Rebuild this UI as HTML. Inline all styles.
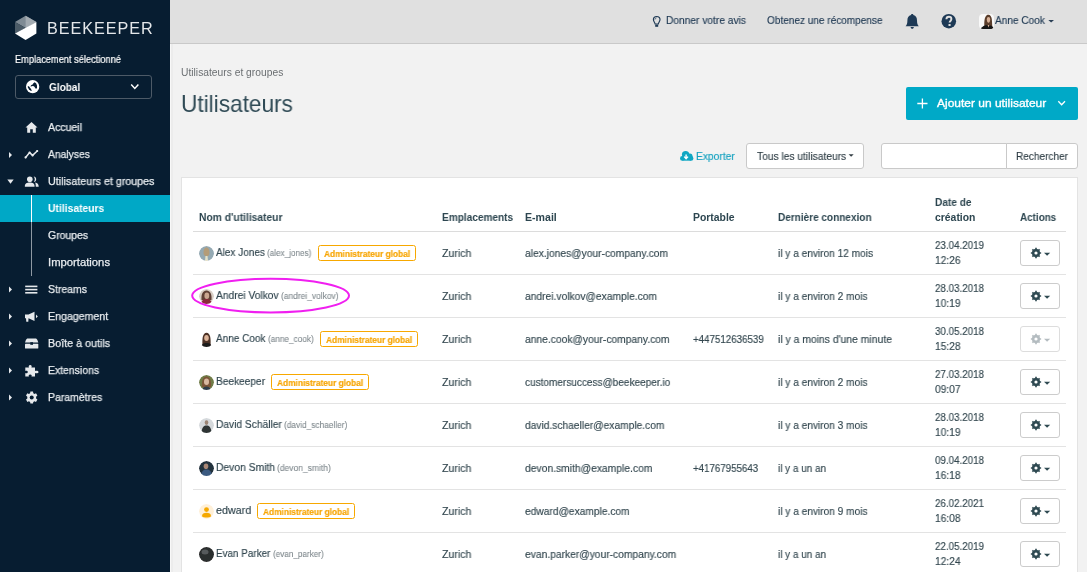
<!DOCTYPE html>
<html><head><meta charset="utf-8">
<style>
*{margin:0;padding:0;box-sizing:border-box}
html,body{width:1087px;height:572px;overflow:hidden;background:#f2f2f2;font-family:"Liberation Sans",sans-serif;position:relative}
.abs{position:absolute}
.tx{position:absolute;white-space:nowrap;line-height:1;transform-origin:0 0;will-change:transform}
#side{position:absolute;left:0;top:0;width:170px;height:572px;background:#071d31}
#topbar{position:absolute;left:170px;top:0;width:917px;height:44px;background:#e0e0e0;border-bottom:1px solid #c9c9c9}
.card{position:absolute;left:181px;top:177px;width:897px;height:420px;background:#fff;border:1px solid #e3e3e3}
.hl{position:absolute;height:1px;background:#dcdcdc}
.badge{position:absolute;height:16px;border:1px solid #f7a800;border-radius:2.5px;background:#fff}
.gbtn{position:absolute;left:1020px;width:40px;height:26px;border:1px solid #c8c8c8;border-radius:3px;background:#fff}
.av{position:absolute;left:199px;width:15px;height:15px;border-radius:50%;overflow:hidden}
</style></head><body>
<div id="side"></div>
<div id="topbar"></div>
<!-- sidebar shadow edge -->
<div class="abs" style="left:170px;top:44px;width:1px;height:528px;background:#f8f8f8"></div><div class="abs" style="left:171px;top:44px;width:2px;height:528px;background:#ececec"></div>

<!-- logo -->
<svg class="abs" style="left:0;top:0" width="170" height="50" viewBox="0 0 170 50">
  <polygon points="25.6,15.8 36.4,21.9 25.6,27.9 15,21.9" fill="#7f8b94"/>
  <polygon points="25.6,15.8 36.4,21.9 25.6,27.9" fill="#a3abb1"/>
  <polygon points="15,21.9 25.6,27.9 15,33.5" fill="#4b5b67"/>
  <polygon points="15,33.5 36.4,21.9 36.4,33.5 25.6,40 " fill="#ffffff"/>
</svg>
<div class="tx" style="left:47.3px;top:20.2px;font-size:16.2px;letter-spacing:0.95px;color:#e4e7ea">BEEKEEPER</div>

<!-- select -->
<div class="abs" style="left:15px;top:75px;width:137px;height:24px;border:1px solid #4d5a67;border-radius:3px"></div>
<svg class="abs" style="left:25.8px;top:79.8px" width="14" height="14" viewBox="0 0 14 14">
  <circle cx="6.65" cy="6.65" r="6.65" fill="#fff"/>
  <path d="M4.4,6.2 L5.4,5.0 L6.6,4.5 L7.4,3.3 L8.7,2.3 L10.2,3.4 L11.0,5.6 L11.0,8.3 L9.8,8.8 L8.9,7.6 L8.0,6.3 L6.6,6.0 L5.0,6.6 Z" fill="#071d31"/>
  <path d="M1.8,6.0 L3.1,6.5 L4.6,8.5 L5.9,10.6 L5.0,10.9 L2.9,9.3 L1.9,7.5 Z" fill="#071d31"/>
</svg>
<svg class="abs" style="left:130px;top:83px" width="10" height="8" viewBox="0 0 10 8">
  <path d="M1.2,1.6 L4.8,5.4 L8.4,1.6" stroke="#fff" stroke-width="1.5" fill="none"/>
</svg>

<!-- active band -->
<div class="abs" style="left:0;top:195px;width:170px;height:27px;background:#00a8c6"></div>
<div class="abs" style="left:31px;top:195px;width:1px;height:27px;background:#ffffff"></div>
<div class="abs" style="left:31px;top:222px;width:1px;height:54px;background:#8f99a3"></div>

<!-- nav icons -->
<svg class="abs" style="left:0;top:110px" width="45" height="300" viewBox="0 110 45 300">
  <!-- home -->
  <path d="M31.5,122 L37.5,127.6 L35.8,127.6 L35.8,132.8 L32.8,132.8 L32.8,129.2 L30.2,129.2 L30.2,132.8 L27.2,132.8 L27.2,127.6 L25.5,127.6 Z" fill="#e6e9ec"/>
  <!-- caret right analyses -->
  <path d="M9,152 L12,155 L9,158 Z" fill="#e6e9ec"/>
  <!-- analytics -->
  <path d="M25.6,157.4 L29.6,152.6 L32.6,155.4 L37.2,151" stroke="#e6e9ec" stroke-width="1.5" fill="none" stroke-linecap="round" stroke-linejoin="round"/><circle cx="25.6" cy="157.4" r="1.1" fill="#e6e9ec"/><circle cx="29.6" cy="152.6" r="1.1" fill="#e6e9ec"/><circle cx="32.6" cy="155.4" r="1.1" fill="#e6e9ec"/><circle cx="37.2" cy="151" r="1.1" fill="#e6e9ec"/>
  <!-- caret down users -->
  <path d="M7.3,179.6 L13.7,179.6 L10.5,183.8 Z" fill="#e6e9ec"/>
  <!-- users -->
  <circle cx="29.8" cy="179.3" r="2.8" fill="#e6e9ec"/>
  <path d="M24.8,186.7 C24.8,183.5 26.8,182.6 29.8,182.6 C32.8,182.6 34.6,183.5 34.6,186.7 Z" fill="#e6e9ec"/>
  <path d="M33.6,176.6 C35.2,176.6 36.2,177.8 36.2,179.3 C36.2,180.8 35.2,181.9 33.8,182 C34.4,181.2 34.8,180.3 34.8,179.3 C34.8,178.3 34.3,177.3 33.6,176.6Z" fill="#e6e9ec"/>
  <path d="M35.2,182.6 C37.4,183 38.7,184.2 38.7,186.7 L35.8,186.7 C35.8,185 35.6,183.8 35.2,182.6Z" fill="#e6e9ec"/>
  <!-- carets right -->
  <path d="M9,286.5 L12,289.5 L9,292.5 Z" fill="#e6e9ec"/>
  <path d="M9,313.5 L12,316.5 L9,319.5 Z" fill="#e6e9ec"/>
  <path d="M9,340.5 L12,343.5 L9,346.5 Z" fill="#e6e9ec"/>
  <path d="M9,367.5 L12,370.5 L9,373.5 Z" fill="#e6e9ec"/>
  <path d="M9,394.5 L12,397.5 L9,400.5 Z" fill="#e6e9ec"/>
  <!-- streams -->
  <rect x="25.2" y="285.6" width="12.2" height="1.6" fill="#e6e9ec"/>
  <rect x="25.2" y="288.8" width="12.2" height="1.6" fill="#e6e9ec"/>
  <rect x="25.2" y="292" width="12.2" height="1.6" fill="#e6e9ec"/>
  <!-- megaphone -->
  <path d="M25,314.5 L28.5,314.5 L34.5,311.7 L34.5,321 L28.5,318.3 L28.3,321.8 L26.3,321.8 L26,318.3 L25,318.3 Z" fill="#e6e9ec"/>
  <path d="M36,314.5 L37.8,316.4 L36,318.3 Z" fill="#e6e9ec"/>
  <!-- toolbox -->
  <path d="M28,338.5 L35.3,338.5 C36.4,338.5 37,339.2 37.4,340 L38.3,342.6 L25,342.6 L25.9,340 C26.3,339.2 26.9,338.5 28,338.5Z" fill="#e6e9ec"/>
  <rect x="25" y="343.8" width="13.3" height="4.8" rx="0.6" fill="#e6e9ec"/>
  <rect x="30.3" y="342.2" width="2.7" height="2.6" fill="#071d31"/>
  <!-- puzzle -->
  <path d="M25.3,367.5 L29,367.5 C28.4,366.6 28.6,365 30.2,365 C31.8,365 32,366.6 31.4,367.5 L35,367.5 L35,371 C35.9,370.4 38.5,370.4 38.5,372 C38.5,373.6 35.9,373.6 35,373 L35,376.6 L31.4,376.6 C32,375.8 31.8,374.4 30.2,374.4 C28.6,374.4 28.4,375.8 29,376.6 L25.3,376.6 L25.3,373 C26.2,373.5 27.8,373.4 27.8,372 C27.8,370.6 26.2,370.5 25.3,371 Z" fill="#e6e9ec"/>
  <!-- gear -->
  <g transform="translate(31.7,397.6)">
    <path d="M-1.3,-6 L1.3,-6 L1.6,-4.3 L2.8,-3.6 L4.3,-4.3 L5.7,-2 L4.4,-0.9 L4.4,0.9 L5.7,2 L4.3,4.3 L2.8,3.6 L1.6,4.3 L1.3,6 L-1.3,6 L-1.6,4.3 L-2.8,3.6 L-4.3,4.3 L-5.7,2 L-4.4,0.9 L-4.4,-0.9 L-5.7,-2 L-4.3,-4.3 L-2.8,-3.6 L-1.6,-4.3 Z" fill="#e6e9ec"/>
    <circle r="2" fill="#071d31"/>
  </g>
</svg>

<!-- topbar icons -->
<svg class="abs" style="left:640px;top:0" width="447" height="44" viewBox="640 0 447 44">
  <!-- bulb -->
  <path d="M655.1,24 C654.8,22.3 653.4,21.3 653.4,19.6 C653.4,17.7 654.9,16.5 656.7,16.5 C658.5,16.5 660,17.7 660,19.6 C660,21.3 658.6,22.3 658.3,24 Z" stroke="#1f3a55" stroke-width="1.15" fill="none"/>
  <path d="M654.9,19.6 C654.9,18.6 655.6,17.9 656.5,17.8" stroke="#1f3a55" stroke-width="0.8" fill="none"/>
  <rect x="655.2" y="24.6" width="3" height="2.2" fill="#1f3a55"/>
  <!-- bell -->
  <path d="M912.2,13.9 C913,13.9 913.4,14.4 913.4,15 C916,15.6 917,17.8 917,20.4 C917,23.6 917.6,24.8 918.8,26.2 L905.6,26.2 C906.8,24.8 907.4,23.6 907.4,20.4 C907.4,17.8 908.4,15.6 911,15 C911,14.4 911.4,13.9 912.2,13.9Z" fill="#1e3a56"/>
  <path d="M910.6,27 L913.8,27 C913.8,28 913,28.8 912.2,28.8 C911.4,28.8 910.6,28 910.6,27Z" fill="#1e3a56"/>
  <!-- question -->
  <circle cx="948.8" cy="21.2" r="7.3" fill="#1e3a56"/>
  <path d="M946.4,19.3 C946.4,17.7 947.5,16.8 948.9,16.8 C950.4,16.8 951.4,17.8 951.4,19.1 C951.4,20.9 949.6,21 949.6,22.6" stroke="#e0e0e0" stroke-width="1.9" fill="none"/>
  <rect x="948.5" y="24" width="2.1" height="2" fill="#e0e0e0"/>
  <!-- caret -->
  <path d="M1048.3,19.9 L1054,19.9 L1051.15,22.4 Z" fill="#2a3f55"/>
</svg>
<!-- topbar avatar -->
<div class="abs" style="left:979px;top:13.6px;width:15.4px;height:15.4px;border-radius:4px;overflow:hidden;background:#f9f9f9">
  <svg width="16" height="16" viewBox="0 0 16 16">
    <path d="M5.6,16 C5,11 5.2,5 6.4,3 C7.2,1.4 8.2,0.8 9.4,0.8 C11.2,0.8 12.4,2.4 12.8,5 C13.2,8 13,12 13.8,16Z" fill="#5a3d2b"/>
    <path d="M7.8,5.6 C7.8,3.8 8.5,3 9.5,3 C10.5,3 11.2,3.8 11.2,5.6 C11.2,7.6 10.5,8.8 9.5,8.8 C8.5,8.8 7.8,7.6 7.8,5.6Z" fill="#d8b197"/>
    <path d="M1.5,16 C2.5,12.6 5,11.2 9.2,11 C12.2,11.2 14.2,12.4 15.5,16Z" fill="#161616"/>
    <path d="M8.6,11 L9.5,13.6 L10.4,11Z" fill="#d8b197"/>
  </svg>
</div>

<!-- add user button -->
<div class="abs" style="left:906px;top:87px;width:172px;height:33px;background:#00a9c7;border-radius:2px"></div>
<svg class="abs" style="left:906px;top:87px" width="171" height="32" viewBox="906 87 171 32">
  <path d="M922.4,98.6 L922.4,108.4 M917.3,103.5 L927.5,103.5" stroke="#fff" stroke-width="1.3"/>
  <path d="M1058.3,101.3 L1061.65,104.8 L1065,101.3" stroke="#fff" stroke-width="1.3" fill="none"/>
</svg>

<!-- export icon -->
<svg class="abs" style="left:676px;top:148px" width="20" height="16" viewBox="676 148 20 16">
  <g fill="#10a7c3">
    <circle cx="685.6" cy="154.6" r="3.7"/>
    <circle cx="689.9" cy="156.2" r="2.6"/>
    <circle cx="682.3" cy="158.4" r="2.3"/>
    <circle cx="691.1" cy="158.4" r="2.3"/>
    <rect x="682.3" y="156" width="8.8" height="4.7"/>
  </g>
  <path d="M686.1,154.4 L686.1,158 M684.2,156.6 L686.1,158.8 L688,156.6" stroke="#fff" stroke-width="1.4" fill="none"/>
</svg>
<!-- dropdown -->
<div class="abs" style="left:746px;top:143px;width:118px;height:26px;background:#fff;border:1px solid #c9c9c9;border-radius:3px"></div>
<svg class="abs" style="left:846px;top:150px" width="10" height="10" viewBox="846 150 10 10">
  <path d="M848.6,154.3 L853.7,154.3 L851.15,156.8 Z" fill="#333e44"/>
</svg>
<!-- search -->
<div class="abs" style="left:881px;top:143px;width:126px;height:26px;background:#fff;border:1px solid #c9c9c9;border-radius:3px 0 0 3px"></div>
<div class="abs" style="left:1006px;top:143px;width:72px;height:26px;background:#fff;border:1px solid #c9c9c9;border-radius:0 3px 3px 0"></div>

<!-- card -->
<div class="card"></div>
<div class="hl" style="left:193px;top:231px;width:873px"></div>
<div class="hl" style="left:193px;top:274px;width:873px;background:#e3e3e3"></div>
<div class="hl" style="left:193px;top:317px;width:873px;background:#e3e3e3"></div>
<div class="hl" style="left:193px;top:360px;width:873px;background:#e3e3e3"></div>
<div class="hl" style="left:193px;top:403px;width:873px;background:#e3e3e3"></div>
<div class="hl" style="left:193px;top:446px;width:873px;background:#e3e3e3"></div>
<div class="hl" style="left:193px;top:489px;width:873px;background:#e3e3e3"></div>
<div class="hl" style="left:193px;top:532px;width:873px;background:#e3e3e3"></div>

<svg class="abs" style="left:199px;top:246px" width="15" height="15" viewBox="0 0 15 15"><defs><clipPath id="cp0"><circle cx="7.5" cy="7.5" r="7.5"/></clipPath><filter id="bl0" x="-20%" y="-20%" width="140%" height="140%"><feGaussianBlur stdDeviation="0.45"/></filter></defs><g clip-path="url(#cp0)"><g filter="url(#bl0)"><circle cx="7.5" cy="7.5" r="7.5" fill="#94a9b3"/><path d="M4.5,7 C4.5,3 5.8,1.5 7.5,1.5 C9.2,1.5 10.5,3 10.5,7 C10.5,9 9,10.5 7.5,10.5 C6,10.5 4.5,9 4.5,7Z" fill="#b49c78"/><path d="M6,15 L6.5,10 L8.5,10 L9,15Z" fill="#e6e2c8"/></g></g></svg>
<div class="badge" style="left:318.0px;top:244.6px;width:98px"></div>
<div class="gbtn" style="top:240px;border-color:#cccccc"></div>
<svg class="abs" style="left:1025px;top:243px" width="30" height="20" viewBox="1025 243 30 20"><path d="M1039.82,252.20 L1041.13,252.15 L1041.13,253.85 L1039.82,253.80 L1039.26,255.13 L1040.23,256.02 L1039.02,257.23 L1038.13,256.26 L1036.80,256.82 L1036.85,258.13 L1035.15,258.13 L1035.20,256.82 L1033.87,256.26 L1032.98,257.23 L1031.77,256.02 L1032.74,255.13 L1032.18,253.80 L1030.87,253.85 L1030.87,252.15 L1032.18,252.20 L1032.74,250.87 L1031.77,249.98 L1032.98,248.77 L1033.87,249.74 L1035.20,249.18 L1035.15,247.87 L1036.85,247.87 L1036.80,249.18 L1038.13,249.74 L1039.02,248.77 L1040.23,249.98 L1039.26,250.87Z" fill="#2f4a52"/><circle cx="1036" cy="253" r="3.9" fill="#2f4a52"/><circle cx="1036" cy="253" r="1.6" fill="#fff"/><path d="M1044,252.7 L1050.2,252.7 L1047.1,255.8Z" fill="#2f4a52"/></svg>
<svg class="abs" style="left:199px;top:289px" width="15" height="15" viewBox="0 0 15 15"><defs><clipPath id="cp1"><circle cx="7.5" cy="7.5" r="7.5"/></clipPath><filter id="bl1" x="-20%" y="-20%" width="140%" height="140%"><feGaussianBlur stdDeviation="0.45"/></filter></defs><g clip-path="url(#cp1)"><g filter="url(#bl1)"><circle cx="7.5" cy="7.5" r="7.5" fill="#d9cfc6"/><path d="M2.5,11 C2,5 4,1.5 7.5,1.5 C11,1.5 13,5 12.5,11Z" fill="#5e4035"/><ellipse cx="7.8" cy="6.8" rx="2.4" ry="3.2" fill="#caa690"/><path d="M2,15 C3,10.5 5,10 7.5,10 C10,10 12,10.5 13,15Z" fill="#8a2a3b"/></g></g></svg>
<div class="gbtn" style="top:283px;border-color:#cccccc"></div>
<svg class="abs" style="left:1025px;top:286px" width="30" height="20" viewBox="1025 286 30 20"><path d="M1039.82,295.20 L1041.13,295.15 L1041.13,296.85 L1039.82,296.80 L1039.26,298.13 L1040.23,299.02 L1039.02,300.23 L1038.13,299.26 L1036.80,299.82 L1036.85,301.13 L1035.15,301.13 L1035.20,299.82 L1033.87,299.26 L1032.98,300.23 L1031.77,299.02 L1032.74,298.13 L1032.18,296.80 L1030.87,296.85 L1030.87,295.15 L1032.18,295.20 L1032.74,293.87 L1031.77,292.98 L1032.98,291.77 L1033.87,292.74 L1035.20,292.18 L1035.15,290.87 L1036.85,290.87 L1036.80,292.18 L1038.13,292.74 L1039.02,291.77 L1040.23,292.98 L1039.26,293.87Z" fill="#2f4a52"/><circle cx="1036" cy="296" r="3.9" fill="#2f4a52"/><circle cx="1036" cy="296" r="1.6" fill="#fff"/><path d="M1044,295.7 L1050.2,295.7 L1047.1,298.8Z" fill="#2f4a52"/></svg>
<svg class="abs" style="left:199px;top:332px" width="15" height="15" viewBox="0 0 15 15"><defs><clipPath id="cp2"><circle cx="7.5" cy="7.5" r="7.5"/></clipPath><filter id="bl2" x="-20%" y="-20%" width="140%" height="140%"><feGaussianBlur stdDeviation="0.45"/></filter></defs><g clip-path="url(#cp2)"><g filter="url(#bl2)"><circle cx="7.5" cy="7.5" r="7.5" fill="#ffffff"/><path d="M3.5,14 C3,7 3.5,1 7.5,0.8 C11.5,1 12,7 11.5,14Z" fill="#4e3326"/><ellipse cx="7.5" cy="6" rx="2.3" ry="3" fill="#dbb398"/><path d="M2,15 C3,11.5 5,11 7.5,11 C10,11 12,11.5 13,15Z" fill="#1b1b1d"/></g></g></svg>
<div class="badge" style="left:320.2px;top:330.6px;width:98px"></div>
<div class="gbtn" style="top:326px;border-color:#dddddd"></div>
<svg class="abs" style="left:1025px;top:329px" width="30" height="20" viewBox="1025 329 30 20"><path d="M1039.82,338.20 L1041.13,338.15 L1041.13,339.85 L1039.82,339.80 L1039.26,341.13 L1040.23,342.02 L1039.02,343.23 L1038.13,342.26 L1036.80,342.82 L1036.85,344.13 L1035.15,344.13 L1035.20,342.82 L1033.87,342.26 L1032.98,343.23 L1031.77,342.02 L1032.74,341.13 L1032.18,339.80 L1030.87,339.85 L1030.87,338.15 L1032.18,338.20 L1032.74,336.87 L1031.77,335.98 L1032.98,334.77 L1033.87,335.74 L1035.20,335.18 L1035.15,333.87 L1036.85,333.87 L1036.80,335.18 L1038.13,335.74 L1039.02,334.77 L1040.23,335.98 L1039.26,336.87Z" fill="#b4bcc0"/><circle cx="1036" cy="339" r="3.9" fill="#b4bcc0"/><circle cx="1036" cy="339" r="1.6" fill="#fff"/><path d="M1044,338.7 L1050.2,338.7 L1047.1,341.8Z" fill="#b4bcc0"/></svg>
<svg class="abs" style="left:199px;top:375px" width="15" height="15" viewBox="0 0 15 15"><defs><clipPath id="cp3"><circle cx="7.5" cy="7.5" r="7.5"/></clipPath><filter id="bl3" x="-20%" y="-20%" width="140%" height="140%"><feGaussianBlur stdDeviation="0.45"/></filter></defs><g clip-path="url(#cp3)"><g filter="url(#bl3)"><circle cx="7.5" cy="7.5" r="7.5" fill="#6f7b47"/><path d="M3,12 C2.5,5 4.5,1.5 7.5,1.5 C10.5,1.5 12.5,5 12,12Z" fill="#7b5538"/><ellipse cx="7.5" cy="6.8" rx="2.5" ry="3.3" fill="#d9b8a0"/><path d="M3,15 C4,12 5.5,11.5 7.5,11.5 C9.5,11.5 11,12 12,15Z" fill="#2e3b48"/></g></g></svg>
<div class="badge" style="left:271.3px;top:373.6px;width:98px"></div>
<div class="gbtn" style="top:369px;border-color:#cccccc"></div>
<svg class="abs" style="left:1025px;top:372px" width="30" height="20" viewBox="1025 372 30 20"><path d="M1039.82,381.20 L1041.13,381.15 L1041.13,382.85 L1039.82,382.80 L1039.26,384.13 L1040.23,385.02 L1039.02,386.23 L1038.13,385.26 L1036.80,385.82 L1036.85,387.13 L1035.15,387.13 L1035.20,385.82 L1033.87,385.26 L1032.98,386.23 L1031.77,385.02 L1032.74,384.13 L1032.18,382.80 L1030.87,382.85 L1030.87,381.15 L1032.18,381.20 L1032.74,379.87 L1031.77,378.98 L1032.98,377.77 L1033.87,378.74 L1035.20,378.18 L1035.15,376.87 L1036.85,376.87 L1036.80,378.18 L1038.13,378.74 L1039.02,377.77 L1040.23,378.98 L1039.26,379.87Z" fill="#2f4a52"/><circle cx="1036" cy="382" r="3.9" fill="#2f4a52"/><circle cx="1036" cy="382" r="1.6" fill="#fff"/><path d="M1044,381.7 L1050.2,381.7 L1047.1,384.8Z" fill="#2f4a52"/></svg>
<svg class="abs" style="left:199px;top:418px" width="15" height="15" viewBox="0 0 15 15"><defs><clipPath id="cp4"><circle cx="7.5" cy="7.5" r="7.5"/></clipPath><filter id="bl4" x="-20%" y="-20%" width="140%" height="140%"><feGaussianBlur stdDeviation="0.45"/></filter></defs><g clip-path="url(#cp4)"><g filter="url(#bl4)"><circle cx="7.5" cy="7.5" r="7.5" fill="#d5d9dc"/><ellipse cx="7.5" cy="4.6" rx="1.8" ry="2.4" fill="#9c8676"/><path d="M2.5,15 C2.8,9 5,7.5 7.5,7.5 C10,7.5 12.2,9 12.5,15Z" fill="#2d3535"/></g></g></svg>
<div class="gbtn" style="top:412px;border-color:#cccccc"></div>
<svg class="abs" style="left:1025px;top:415px" width="30" height="20" viewBox="1025 415 30 20"><path d="M1039.82,424.20 L1041.13,424.15 L1041.13,425.85 L1039.82,425.80 L1039.26,427.13 L1040.23,428.02 L1039.02,429.23 L1038.13,428.26 L1036.80,428.82 L1036.85,430.13 L1035.15,430.13 L1035.20,428.82 L1033.87,428.26 L1032.98,429.23 L1031.77,428.02 L1032.74,427.13 L1032.18,425.80 L1030.87,425.85 L1030.87,424.15 L1032.18,424.20 L1032.74,422.87 L1031.77,421.98 L1032.98,420.77 L1033.87,421.74 L1035.20,421.18 L1035.15,419.87 L1036.85,419.87 L1036.80,421.18 L1038.13,421.74 L1039.02,420.77 L1040.23,421.98 L1039.26,422.87Z" fill="#2f4a52"/><circle cx="1036" cy="425" r="3.9" fill="#2f4a52"/><circle cx="1036" cy="425" r="1.6" fill="#fff"/><path d="M1044,424.7 L1050.2,424.7 L1047.1,427.8Z" fill="#2f4a52"/></svg>
<svg class="abs" style="left:199px;top:461px" width="15" height="15" viewBox="0 0 15 15"><defs><clipPath id="cp5"><circle cx="7.5" cy="7.5" r="7.5"/></clipPath><filter id="bl5" x="-20%" y="-20%" width="140%" height="140%"><feGaussianBlur stdDeviation="0.45"/></filter></defs><g clip-path="url(#cp5)"><g filter="url(#bl5)"><circle cx="7.5" cy="7.5" r="7.5" fill="#24313d"/><ellipse cx="7" cy="5.2" rx="2.3" ry="2.8" fill="#a88774"/><path d="M2,15 C2.5,10 4.5,8.5 7.5,8.5 C10.5,8.5 12.5,10 13,15Z" fill="#3b5a80"/></g></g></svg>
<div class="gbtn" style="top:455px;border-color:#cccccc"></div>
<svg class="abs" style="left:1025px;top:458px" width="30" height="20" viewBox="1025 458 30 20"><path d="M1039.82,467.20 L1041.13,467.15 L1041.13,468.85 L1039.82,468.80 L1039.26,470.13 L1040.23,471.02 L1039.02,472.23 L1038.13,471.26 L1036.80,471.82 L1036.85,473.13 L1035.15,473.13 L1035.20,471.82 L1033.87,471.26 L1032.98,472.23 L1031.77,471.02 L1032.74,470.13 L1032.18,468.80 L1030.87,468.85 L1030.87,467.15 L1032.18,467.20 L1032.74,465.87 L1031.77,464.98 L1032.98,463.77 L1033.87,464.74 L1035.20,464.18 L1035.15,462.87 L1036.85,462.87 L1036.80,464.18 L1038.13,464.74 L1039.02,463.77 L1040.23,464.98 L1039.26,465.87Z" fill="#2f4a52"/><circle cx="1036" cy="468" r="3.9" fill="#2f4a52"/><circle cx="1036" cy="468" r="1.6" fill="#fff"/><path d="M1044,467.7 L1050.2,467.7 L1047.1,470.8Z" fill="#2f4a52"/></svg>
<svg class="abs" style="left:199px;top:504px" width="15" height="15" viewBox="0 0 15 15"><defs><clipPath id="cp6"><circle cx="7.5" cy="7.5" r="7.5"/></clipPath><filter id="bl6" x="-20%" y="-20%" width="140%" height="140%"><feGaussianBlur stdDeviation="0.45"/></filter></defs><g clip-path="url(#cp6)"><g filter="url(#bl6)"><circle cx="7.5" cy="7.5" r="7.5" fill="#fff0d8"/><circle cx="7.5" cy="5.6" r="2.4" fill="#f5a800"/><path d="M3,12.2 C3,9.6 5,8.8 7.5,8.8 C10,8.8 12,9.6 12,12.2 C11,13.2 9.5,13.6 7.5,13.6 C5.5,13.6 4,13.2 3,12.2Z" fill="#f5a800"/></g></g></svg>
<div class="badge" style="left:257.0px;top:502.6px;width:98px"></div>
<div class="gbtn" style="top:498px;border-color:#cccccc"></div>
<svg class="abs" style="left:1025px;top:501px" width="30" height="20" viewBox="1025 501 30 20"><path d="M1039.82,510.20 L1041.13,510.15 L1041.13,511.85 L1039.82,511.80 L1039.26,513.13 L1040.23,514.02 L1039.02,515.23 L1038.13,514.26 L1036.80,514.82 L1036.85,516.13 L1035.15,516.13 L1035.20,514.82 L1033.87,514.26 L1032.98,515.23 L1031.77,514.02 L1032.74,513.13 L1032.18,511.80 L1030.87,511.85 L1030.87,510.15 L1032.18,510.20 L1032.74,508.87 L1031.77,507.98 L1032.98,506.77 L1033.87,507.74 L1035.20,507.18 L1035.15,505.87 L1036.85,505.87 L1036.80,507.18 L1038.13,507.74 L1039.02,506.77 L1040.23,507.98 L1039.26,508.87Z" fill="#2f4a52"/><circle cx="1036" cy="511" r="3.9" fill="#2f4a52"/><circle cx="1036" cy="511" r="1.6" fill="#fff"/><path d="M1044,510.7 L1050.2,510.7 L1047.1,513.8Z" fill="#2f4a52"/></svg>
<svg class="abs" style="left:199px;top:547px" width="15" height="15" viewBox="0 0 15 15"><defs><clipPath id="cp7"><circle cx="7.5" cy="7.5" r="7.5"/></clipPath><filter id="bl7" x="-20%" y="-20%" width="140%" height="140%"><feGaussianBlur stdDeviation="0.45"/></filter></defs><g clip-path="url(#cp7)"><g filter="url(#bl7)"><circle cx="7.5" cy="7.5" r="7.5" fill="#2b2d2e"/><ellipse cx="6" cy="5" rx="3.5" ry="2.5" fill="#6b6e70" opacity="0.7"/><circle cx="7.5" cy="7.5" r="7.5" fill="none" stroke="#1a1a1a" stroke-width="0.6"/></g></g></svg>
<div class="gbtn" style="top:541px;border-color:#cccccc"></div>
<svg class="abs" style="left:1025px;top:544px" width="30" height="20" viewBox="1025 544 30 20"><path d="M1039.82,553.20 L1041.13,553.15 L1041.13,554.85 L1039.82,554.80 L1039.26,556.13 L1040.23,557.02 L1039.02,558.23 L1038.13,557.26 L1036.80,557.82 L1036.85,559.13 L1035.15,559.13 L1035.20,557.82 L1033.87,557.26 L1032.98,558.23 L1031.77,557.02 L1032.74,556.13 L1032.18,554.80 L1030.87,554.85 L1030.87,553.15 L1032.18,553.20 L1032.74,551.87 L1031.77,550.98 L1032.98,549.77 L1033.87,550.74 L1035.20,550.18 L1035.15,548.87 L1036.85,548.87 L1036.80,550.18 L1038.13,550.74 L1039.02,549.77 L1040.23,550.98 L1039.26,551.87Z" fill="#2f4a52"/><circle cx="1036" cy="554" r="3.9" fill="#2f4a52"/><circle cx="1036" cy="554" r="1.6" fill="#fff"/><path d="M1044,553.7 L1050.2,553.7 L1047.1,556.8Z" fill="#2f4a52"/></svg>
<!--BADGES-->
<!--GEARS-->

<div class='tx' style='left:665.5px;top:15.36px;font-size:10.80px;font-weight:400;color:#1e3852;transform:scaleX(0.944);-webkit-text-stroke:0.15px #1e3852;'>Donner votre avis</div>
<div class='tx' style='left:767.3px;top:15.36px;font-size:10.80px;font-weight:400;color:#1e3852;transform:scaleX(0.930);-webkit-text-stroke:0.15px #1e3852;'>Obtenez une récompense</div>
<div class='tx' style='left:995.0px;top:15.36px;font-size:10.80px;font-weight:400;color:#1e3852;transform:scaleX(0.933);-webkit-text-stroke:0.15px #1e3852;'>Anne Cook</div>
<div class='tx' style='left:14.9px;top:55.48px;font-size:10.30px;font-weight:400;color:#ffffff;transform:scaleX(0.898);-webkit-text-stroke:0.2px #fff;'>Emplacement sélectionné</div>
<div class='tx' style='left:48.5px;top:81.96px;font-size:10.80px;font-weight:700;color:#ffffff;transform:scaleX(0.930);'>Global</div>
<div class='tx' style='left:47.5px;top:121.96px;font-size:10.80px;font-weight:400;color:#e9edf0;transform:scaleX(0.976);-webkit-text-stroke:0.25px #e9edf0;'>Accueil</div>
<div class='tx' style='left:47.5px;top:148.96px;font-size:10.80px;font-weight:400;color:#e9edf0;transform:scaleX(0.955);-webkit-text-stroke:0.25px #e9edf0;'>Analyses</div>
<div class='tx' style='left:47.5px;top:175.96px;font-size:10.80px;font-weight:400;color:#e9edf0;transform:scaleX(0.991);-webkit-text-stroke:0.25px #e9edf0;'>Utilisateurs et groupes</div>
<div class='tx' style='left:47.5px;top:202.96px;font-size:10.80px;font-weight:700;color:#ffffff;transform:scaleX(0.957);'>Utilisateurs</div>
<div class='tx' style='left:47.5px;top:229.96px;font-size:10.80px;font-weight:400;color:#e9edf0;transform:scaleX(0.967);-webkit-text-stroke:0.25px #e9edf0;'>Groupes</div>
<div class='tx' style='left:47.5px;top:256.96px;font-size:10.80px;font-weight:400;color:#e9edf0;transform:scaleX(1.044);-webkit-text-stroke:0.25px #e9edf0;'>Importations</div>
<div class='tx' style='left:47.5px;top:283.96px;font-size:10.80px;font-weight:400;color:#e9edf0;transform:scaleX(0.971);-webkit-text-stroke:0.25px #e9edf0;'>Streams</div>
<div class='tx' style='left:47.5px;top:310.96px;font-size:10.80px;font-weight:400;color:#e9edf0;transform:scaleX(0.982);-webkit-text-stroke:0.25px #e9edf0;'>Engagement</div>
<div class='tx' style='left:47.5px;top:337.96px;font-size:10.80px;font-weight:400;color:#e9edf0;transform:scaleX(0.994);-webkit-text-stroke:0.25px #e9edf0;'>Boîte à outils</div>
<div class='tx' style='left:47.5px;top:364.96px;font-size:10.80px;font-weight:400;color:#e9edf0;transform:scaleX(0.967);-webkit-text-stroke:0.25px #e9edf0;'>Extensions</div>
<div class='tx' style='left:47.5px;top:391.96px;font-size:10.80px;font-weight:400;color:#e9edf0;transform:scaleX(0.970);-webkit-text-stroke:0.25px #e9edf0;'>Paramètres</div>
<div class='tx' style='left:180.5px;top:67.87px;font-size:10.20px;font-weight:400;color:#6b6f72;transform:scaleX(1.009);'>Utilisateurs et groupes</div>
<div class='tx' style='left:180.7px;top:92.86px;font-size:23.20px;font-weight:400;color:#2f4a55;transform:scaleX(0.976);'>Utilisateurs</div>
<div class='tx' style='left:936.8px;top:97.55px;font-size:11.40px;font-weight:400;color:#ffffff;transform:scaleX(1.052);-webkit-text-stroke:0.35px #fff;'>Ajouter un utilisateur</div>
<div class='tx' style='left:695.5px;top:151.46px;font-size:10.80px;font-weight:400;color:#11a0bf;transform:scaleX(0.950);-webkit-text-stroke:0.15px #11a0bf;'>Exporter</div>
<div class='tx' style='left:756.5px;top:151.46px;font-size:10.80px;font-weight:400;color:#2b3a42;transform:scaleX(0.947);-webkit-text-stroke:0.12px #2b3a42;'>Tous les utilisateurs</div>
<div class='tx' style='left:1015.8px;top:151.46px;font-size:10.80px;font-weight:400;color:#2b3a42;transform:scaleX(0.931);-webkit-text-stroke:0.12px #2b3a42;'>Rechercher</div>
<div class='tx' style='left:199.1px;top:212.90px;font-size:10.40px;font-weight:700;color:#2d4650;transform:scaleX(0.989);'>Nom d'utilisateur</div>
<div class='tx' style='left:441.5px;top:212.90px;font-size:10.40px;font-weight:700;color:#2d4650;transform:scaleX(0.970);'>Emplacements</div>
<div class='tx' style='left:524.5px;top:212.90px;font-size:10.40px;font-weight:700;color:#2d4650;transform:scaleX(1.020);'>E-mail</div>
<div class='tx' style='left:693.3px;top:212.90px;font-size:10.40px;font-weight:700;color:#2d4650;'>Portable</div>
<div class='tx' style='left:777.7px;top:212.90px;font-size:10.40px;font-weight:700;color:#2d4650;transform:scaleX(0.964);'>Dernière connexion</div>
<div class='tx' style='left:935.3px;top:198.00px;font-size:10.40px;font-weight:700;color:#2d4650;transform:scaleX(0.972);'>Date de</div>
<div class='tx' style='left:935.3px;top:212.90px;font-size:10.40px;font-weight:700;color:#2d4650;transform:scaleX(0.989);'>création</div>
<div class='tx' style='left:1019.7px;top:212.90px;font-size:10.40px;font-weight:700;color:#2d4650;transform:scaleX(0.950);'>Actions</div>
<div class='tx' style='left:215.5px;top:247.26px;font-size:10.80px;font-weight:400;color:#2f444d;transform:scaleX(0.925);-webkit-text-stroke:0.15px #2f444d;'>Alex Jones</div>
<div class='tx' style='left:266.9px;top:248.58px;font-size:9.00px;font-weight:400;color:#7f888d;transform:scaleX(0.904);-webkit-text-stroke:0.1px #7f888d;'>(alex_jones)</div>
<div class='tx' style='left:441.5px;top:248.06px;font-size:10.80px;font-weight:400;color:#33474f;transform:scaleX(0.979);-webkit-text-stroke:0.15px #33474f;'>Zurich</div>
<div class='tx' style='left:524.5px;top:248.06px;font-size:10.80px;font-weight:400;color:#33474f;transform:scaleX(0.950);-webkit-text-stroke:0.15px #33474f;'>alex.jones@your-company.com</div>
<div class='tx' style='left:777.7px;top:248.06px;font-size:10.80px;font-weight:400;color:#33474f;transform:scaleX(0.938);-webkit-text-stroke:0.15px #33474f;'>il y a environ 12 mois</div>
<div class='tx' style='left:935.3px;top:239.66px;font-size:10.80px;font-weight:400;color:#33474f;transform:scaleX(0.908);-webkit-text-stroke:0.15px #33474f;'>23.04.2019</div>
<div class='tx' style='left:935.3px;top:255.26px;font-size:10.80px;font-weight:400;color:#33474f;transform:scaleX(0.946);-webkit-text-stroke:0.15px #33474f;'>12:26</div>
<div class='tx' style='left:323.5px;top:249.24px;font-size:9.40px;font-weight:700;color:#f7a500;transform:scaleX(0.889);-webkit-text-stroke:0.2px #f7a500;'>Administrateur global</div>
<div class='tx' style='left:215.5px;top:290.26px;font-size:10.80px;font-weight:400;color:#2f444d;transform:scaleX(0.949);-webkit-text-stroke:0.15px #2f444d;'>Andrei Volkov</div>
<div class='tx' style='left:280.7px;top:291.58px;font-size:9.00px;font-weight:400;color:#7f888d;transform:scaleX(0.935);-webkit-text-stroke:0.1px #7f888d;'>(andrei_volkov)</div>
<div class='tx' style='left:441.5px;top:291.06px;font-size:10.80px;font-weight:400;color:#33474f;transform:scaleX(0.979);-webkit-text-stroke:0.15px #33474f;'>Zurich</div>
<div class='tx' style='left:524.5px;top:291.06px;font-size:10.80px;font-weight:400;color:#33474f;transform:scaleX(0.951);-webkit-text-stroke:0.15px #33474f;'>andrei.volkov@example.com</div>
<div class='tx' style='left:777.7px;top:291.06px;font-size:10.80px;font-weight:400;color:#33474f;transform:scaleX(0.939);-webkit-text-stroke:0.15px #33474f;'>il y a environ 2 mois</div>
<div class='tx' style='left:935.3px;top:282.66px;font-size:10.80px;font-weight:400;color:#33474f;transform:scaleX(0.908);-webkit-text-stroke:0.15px #33474f;'>28.03.2018</div>
<div class='tx' style='left:935.3px;top:298.26px;font-size:10.80px;font-weight:400;color:#33474f;transform:scaleX(0.946);-webkit-text-stroke:0.15px #33474f;'>10:19</div>
<div class='tx' style='left:215.5px;top:333.26px;font-size:10.80px;font-weight:400;color:#2f444d;transform:scaleX(0.926);-webkit-text-stroke:0.15px #2f444d;'>Anne Cook</div>
<div class='tx' style='left:267.5px;top:334.58px;font-size:9.00px;font-weight:400;color:#7f888d;transform:scaleX(0.914);-webkit-text-stroke:0.1px #7f888d;'>(anne_cook)</div>
<div class='tx' style='left:441.5px;top:334.06px;font-size:10.80px;font-weight:400;color:#33474f;transform:scaleX(0.979);-webkit-text-stroke:0.15px #33474f;'>Zurich</div>
<div class='tx' style='left:524.5px;top:334.06px;font-size:10.80px;font-weight:400;color:#33474f;transform:scaleX(0.952);-webkit-text-stroke:0.15px #33474f;'>anne.cook@your-company.com</div>
<div class='tx' style='left:693.3px;top:334.06px;font-size:10.80px;font-weight:400;color:#33474f;transform:scaleX(0.904);-webkit-text-stroke:0.15px #33474f;'>+447512636539</div>
<div class='tx' style='left:777.7px;top:334.06px;font-size:10.80px;font-weight:400;color:#33474f;transform:scaleX(0.962);-webkit-text-stroke:0.15px #33474f;'>il y a moins d'une minute</div>
<div class='tx' style='left:935.3px;top:325.66px;font-size:10.80px;font-weight:400;color:#33474f;transform:scaleX(0.908);-webkit-text-stroke:0.15px #33474f;'>30.05.2018</div>
<div class='tx' style='left:935.3px;top:341.26px;font-size:10.80px;font-weight:400;color:#33474f;transform:scaleX(0.946);-webkit-text-stroke:0.15px #33474f;'>15:28</div>
<div class='tx' style='left:325.7px;top:335.24px;font-size:9.40px;font-weight:700;color:#f7a500;transform:scaleX(0.889);-webkit-text-stroke:0.2px #f7a500;'>Administrateur global</div>
<div class='tx' style='left:215.5px;top:376.26px;font-size:10.80px;font-weight:400;color:#2f444d;transform:scaleX(0.939);-webkit-text-stroke:0.15px #2f444d;'>Beekeeper</div>
<div class='tx' style='left:441.5px;top:377.06px;font-size:10.80px;font-weight:400;color:#33474f;transform:scaleX(0.979);-webkit-text-stroke:0.15px #33474f;'>Zurich</div>
<div class='tx' style='left:524.5px;top:377.06px;font-size:10.80px;font-weight:400;color:#33474f;transform:scaleX(0.930);-webkit-text-stroke:0.15px #33474f;'>customersuccess@beekeeper.io</div>
<div class='tx' style='left:777.7px;top:377.06px;font-size:10.80px;font-weight:400;color:#33474f;transform:scaleX(0.939);-webkit-text-stroke:0.15px #33474f;'>il y a environ 2 mois</div>
<div class='tx' style='left:935.3px;top:368.66px;font-size:10.80px;font-weight:400;color:#33474f;transform:scaleX(0.908);-webkit-text-stroke:0.15px #33474f;'>27.03.2018</div>
<div class='tx' style='left:935.3px;top:384.26px;font-size:10.80px;font-weight:400;color:#33474f;transform:scaleX(0.946);-webkit-text-stroke:0.15px #33474f;'>09:07</div>
<div class='tx' style='left:276.8px;top:378.24px;font-size:9.40px;font-weight:700;color:#f7a500;transform:scaleX(0.889);-webkit-text-stroke:0.2px #f7a500;'>Administrateur global</div>
<div class='tx' style='left:215.5px;top:419.26px;font-size:10.80px;font-weight:400;color:#2f444d;transform:scaleX(0.946);-webkit-text-stroke:0.15px #2f444d;'>David Schäller</div>
<div class='tx' style='left:283.9px;top:420.58px;font-size:9.00px;font-weight:400;color:#7f888d;transform:scaleX(0.924);-webkit-text-stroke:0.1px #7f888d;'>(david_schaeller)</div>
<div class='tx' style='left:441.5px;top:420.06px;font-size:10.80px;font-weight:400;color:#33474f;transform:scaleX(0.979);-webkit-text-stroke:0.15px #33474f;'>Zurich</div>
<div class='tx' style='left:524.5px;top:420.06px;font-size:10.80px;font-weight:400;color:#33474f;transform:scaleX(0.947);-webkit-text-stroke:0.15px #33474f;'>david.schaeller@example.com</div>
<div class='tx' style='left:777.7px;top:420.06px;font-size:10.80px;font-weight:400;color:#33474f;transform:scaleX(0.939);-webkit-text-stroke:0.15px #33474f;'>il y a environ 3 mois</div>
<div class='tx' style='left:935.3px;top:411.66px;font-size:10.80px;font-weight:400;color:#33474f;transform:scaleX(0.908);-webkit-text-stroke:0.15px #33474f;'>28.03.2018</div>
<div class='tx' style='left:935.3px;top:427.26px;font-size:10.80px;font-weight:400;color:#33474f;transform:scaleX(0.946);-webkit-text-stroke:0.15px #33474f;'>10:19</div>
<div class='tx' style='left:215.5px;top:462.26px;font-size:10.80px;font-weight:400;color:#2f444d;transform:scaleX(0.955);-webkit-text-stroke:0.15px #2f444d;'>Devon Smith</div>
<div class='tx' style='left:277.1px;top:463.58px;font-size:9.00px;font-weight:400;color:#7f888d;transform:scaleX(0.944);-webkit-text-stroke:0.1px #7f888d;'>(devon_smith)</div>
<div class='tx' style='left:441.5px;top:463.06px;font-size:10.80px;font-weight:400;color:#33474f;transform:scaleX(0.979);-webkit-text-stroke:0.15px #33474f;'>Zurich</div>
<div class='tx' style='left:524.5px;top:463.06px;font-size:10.80px;font-weight:400;color:#33474f;transform:scaleX(0.955);-webkit-text-stroke:0.15px #33474f;'>devon.smith@example.com</div>
<div class='tx' style='left:693.3px;top:463.06px;font-size:10.80px;font-weight:400;color:#33474f;transform:scaleX(0.902);-webkit-text-stroke:0.15px #33474f;'>+41767955643</div>
<div class='tx' style='left:777.7px;top:463.06px;font-size:10.80px;font-weight:400;color:#33474f;transform:scaleX(0.920);-webkit-text-stroke:0.15px #33474f;'>il y a un an</div>
<div class='tx' style='left:935.3px;top:454.66px;font-size:10.80px;font-weight:400;color:#33474f;transform:scaleX(0.908);-webkit-text-stroke:0.15px #33474f;'>09.04.2018</div>
<div class='tx' style='left:935.3px;top:470.26px;font-size:10.80px;font-weight:400;color:#33474f;transform:scaleX(0.946);-webkit-text-stroke:0.15px #33474f;'>16:18</div>
<div class='tx' style='left:215.5px;top:505.26px;font-size:10.80px;font-weight:400;color:#2f444d;transform:scaleX(0.993);-webkit-text-stroke:0.15px #2f444d;'>edward</div>
<div class='tx' style='left:441.5px;top:506.06px;font-size:10.80px;font-weight:400;color:#33474f;transform:scaleX(0.979);-webkit-text-stroke:0.15px #33474f;'>Zurich</div>
<div class='tx' style='left:524.5px;top:506.06px;font-size:10.80px;font-weight:400;color:#33474f;transform:scaleX(0.946);-webkit-text-stroke:0.15px #33474f;'>edward@example.com</div>
<div class='tx' style='left:777.7px;top:506.06px;font-size:10.80px;font-weight:400;color:#33474f;transform:scaleX(0.939);-webkit-text-stroke:0.15px #33474f;'>il y a environ 9 mois</div>
<div class='tx' style='left:935.3px;top:497.66px;font-size:10.80px;font-weight:400;color:#33474f;transform:scaleX(0.908);-webkit-text-stroke:0.15px #33474f;'>26.02.2021</div>
<div class='tx' style='left:935.3px;top:513.26px;font-size:10.80px;font-weight:400;color:#33474f;transform:scaleX(0.946);-webkit-text-stroke:0.15px #33474f;'>16:08</div>
<div class='tx' style='left:262.5px;top:507.24px;font-size:9.40px;font-weight:700;color:#f7a500;transform:scaleX(0.889);-webkit-text-stroke:0.2px #f7a500;'>Administrateur global</div>
<div class='tx' style='left:215.5px;top:548.26px;font-size:10.80px;font-weight:400;color:#2f444d;transform:scaleX(0.916);-webkit-text-stroke:0.15px #2f444d;'>Evan Parker</div>
<div class='tx' style='left:272.5px;top:549.58px;font-size:9.00px;font-weight:400;color:#7f888d;transform:scaleX(0.905);-webkit-text-stroke:0.1px #7f888d;'>(evan_parker)</div>
<div class='tx' style='left:441.5px;top:549.06px;font-size:10.80px;font-weight:400;color:#33474f;transform:scaleX(0.979);-webkit-text-stroke:0.15px #33474f;'>Zurich</div>
<div class='tx' style='left:524.5px;top:549.06px;font-size:10.80px;font-weight:400;color:#33474f;transform:scaleX(0.951);-webkit-text-stroke:0.15px #33474f;'>evan.parker@your-company.com</div>
<div class='tx' style='left:777.7px;top:549.06px;font-size:10.80px;font-weight:400;color:#33474f;transform:scaleX(0.920);-webkit-text-stroke:0.15px #33474f;'>il y a un an</div>
<div class='tx' style='left:935.3px;top:540.66px;font-size:10.80px;font-weight:400;color:#33474f;transform:scaleX(0.908);-webkit-text-stroke:0.15px #33474f;'>22.05.2019</div>
<div class='tx' style='left:935.3px;top:556.26px;font-size:10.80px;font-weight:400;color:#33474f;transform:scaleX(0.946);-webkit-text-stroke:0.15px #33474f;'>12:24</div>

<!-- highlight ellipse -->
<svg class="abs" style="left:185px;top:270px" width="175" height="50" viewBox="185 270 175 50">
  <ellipse cx="270.6" cy="295.6" rx="78.4" ry="16.8" stroke="#f01ff0" stroke-width="2" fill="none"/>
</svg>
</body></html>
